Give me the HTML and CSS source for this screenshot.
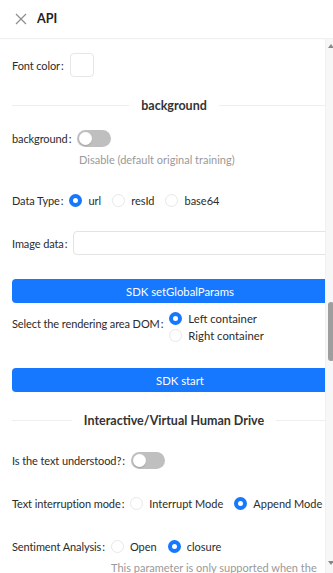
FILE: index.html
```html
<!DOCTYPE html>
<html>
<head>
<meta charset="utf-8">
<link rel="stylesheet" href="styles.css">
</head>
<body>
<div class="header">
  <svg class="close" width="12" height="12" viewBox="0 0 12 12"><path d="M1 1L11 11M11 1L1 11" stroke="#8c8c8c" stroke-width="1.2" fill="none"/></svg>
  <span class="title">API</span>
</div>
<div class="viewport">
  <div class="content">
    <div class="item item-font">
      <span class="label">Font color<span class="colon">:</span></span>
      <span class="swatch"></span>
    </div>
    <div class="divider div1"><span class="line"></span><span class="dtext">background</span><span class="line"></span></div>
    <div class="item item-bg">
      <span class="label">background<span class="colon">:</span></span>
      <span class="switch"><span class="knob"></span></span>
    </div>
    <div class="hint hint-bg">Disable (default original training)</div>
    <div class="item item-type">
      <span class="label">Data Type<span class="colon">:</span></span>
      <span class="radio checked"></span><span class="rlabel">url</span>
      <span class="radio"></span><span class="rlabel">resId</span>
      <span class="radio"></span><span class="rlabel">base64</span>
    </div>
    <div class="item item-img">
      <span class="label">Image data<span class="colon">:</span></span>
      <span class="input"></span>
    </div>
    <div class="btn btn1">SDK setGlobalParams</div>
    <div class="item-dom">
      <span class="label">Select the rendering area DOM<span class="colon">:</span></span>
      <div class="rgroup">
        <div class="ropt"><span class="radio checked"></span><span class="rlabel">Left container</span></div>
        <div class="ropt"><span class="radio"></span><span class="rlabel">Right container</span></div>
      </div>
    </div>
    <div class="btn btn2">SDK start</div>
    <div class="divider div2"><span class="line"></span><span class="dtext">Interactive/Virtual Human Drive</span><span class="line"></span></div>
    <div class="item item-und">
      <span class="label">Is the text understood?<span class="colon">:</span></span>
      <span class="switch"><span class="knob"></span></span>
    </div>
    <div class="item item-int">
      <span class="label">Text interruption mode<span class="colon">:</span></span>
      <span class="radio"></span><span class="rlabel">Interrupt Mode</span>
      <span class="radio checked"></span><span class="rlabel">Append Mode</span>
    </div>
    <div class="item item-sent">
      <span class="label">Sentiment Analysis<span class="colon">:</span></span>
      <span class="radio"></span><span class="rlabel">Open</span>
      <span class="radio checked"></span><span class="rlabel">closure</span>
    </div>
    <div class="hint hint-sent">This parameter is only supported when the</div>
  </div>
  <div class="scrollbar">
    <span class="arrow up"></span>
    <span class="thumb"></span>
    <span class="arrow down"></span>
  </div>
</div>
</body>
</html>
```
FILE: styles.css
```css
* { box-sizing: border-box; }
html, body { margin: 0; padding: 0; background: #fff; }
body {
  width: 333px;
  height: 573px;
  overflow: hidden;
  font-family: Lato, "Noto Sans", sans-serif;
  font-size: 11px;
  color: #2b2b2b;
}
.header {
  height: 39px;
  display: flex;
  align-items: center;
  padding-left: 15px;
  border-bottom: 1px solid #f0f0f0;
  box-shadow: 0 1px 2px rgba(0,0,0,0.02);
}
.close { margin-right: 10px; }
.title { font-weight: 700; font-size: 12.5px; color: #222; padding-bottom: 1px; }
.viewport {
  position: relative;
  height: 534px;
  overflow: hidden;
}
.content {
  width: 336px;
  padding-left: 12px;
  padding-top: 14px;
}
.item {
  display: flex;
  align-items: center;
  height: 24px;
  white-space: nowrap;
}
.label { color: #2b2b2b; letter-spacing: -0.1px; }
.colon { margin: 0 6px 0 1px; }
.swatch {
  width: 24px; height: 24px;
  border: 1px solid #e6e6e6;
  border-radius: 4px;
}
.divider {
  display: flex;
  align-items: center;
  height: 20px;
}
.line { flex: 1; height: 1px; background: #eeeeee; }
.dtext { font-weight: 700; font-size: 12.5px; color: #333; padding: 0 12px; }
.div1 { margin-top: 18px; }
.item-bg { margin-top: 11px; }
.switch {
  position: relative;
  width: 34px; height: 17px;
  border-radius: 9px;
  background: #bfbfbf;
}
.knob {
  position: absolute;
  left: 2px; top: 2px;
  width: 13px; height: 13px;
  border-radius: 50%;
  background: #fff;
  box-shadow: 0 1px 1px rgba(0,0,0,0.15);
}
.hint { color: #999; padding-left: 67px; height: 18px; line-height: 18px; white-space: nowrap; font-size: 11px; }
.hint-bg { margin-top: 1px; }
.item-type { margin-top: 19px; }
.radio {
  width: 13px; height: 13px;
  border-radius: 50%;
  border: 1px solid #e8e8e8;
  background: #fff;
  flex: none;
}
.radio.checked {
  border: 4px solid #1677ff;
  background: #fff;
}
.rlabel { margin: 0 11px 0 6px; }
.item-img { margin-top: 19px; }
.input {
  flex: 1;
  height: 24px;
  border: 1px solid #e3e3e3;
  border-radius: 4px;
}
.btn {
  height: 24px;
  border-radius: 4px;
  background: #1677ff;
  color: #fff;
  display: flex;
  align-items: center;
  justify-content: center;
  padding-left: 12px;
  font-size: 11.3px;
}
.btn1 { margin-top: 24px; }
.item-dom {
  display: flex;
  align-items: flex-start;
  margin-top: 8px;
  white-space: nowrap;
}
.item-dom .label { padding-top: 6px; }
.rgroup { display: flex; flex-direction: column; margin-top: -1px; }
.ropt { display: flex; align-items: center; height: 17px; }
.ropt .rlabel { font-size: 11.3px; }
.btn2 { margin-top: 24px; }
.div2 { margin-top: 18px; }
.item-und { margin-top: 18px; }
.item-int { margin-top: 19px; }
.item-sent { margin-top: 19px; }
.hint-sent { padding-left: 99px; margin-top: 1px; }
.scrollbar {
  position: absolute;
  top: 0; right: 0;
  width: 8px; height: 100%;
  background: #f7f7f7;
  border-left: 1px solid #f0f0f0;
}
.thumb {
  position: absolute;
  left: 2px; top: 263px;
  width: 6px; height: 59px;
  border-radius: 3px;
  background: #9e9e9e;
}
.arrow {
  position: absolute;
  left: 2px;
  width: 0; height: 0;
  border-left: 3px solid transparent;
  border-right: 3px solid transparent;
}
.arrow.up { top: 5px; border-bottom: 4px solid #888; }
.arrow.down { bottom: 8px; border-top: 4px solid #888; }
```
